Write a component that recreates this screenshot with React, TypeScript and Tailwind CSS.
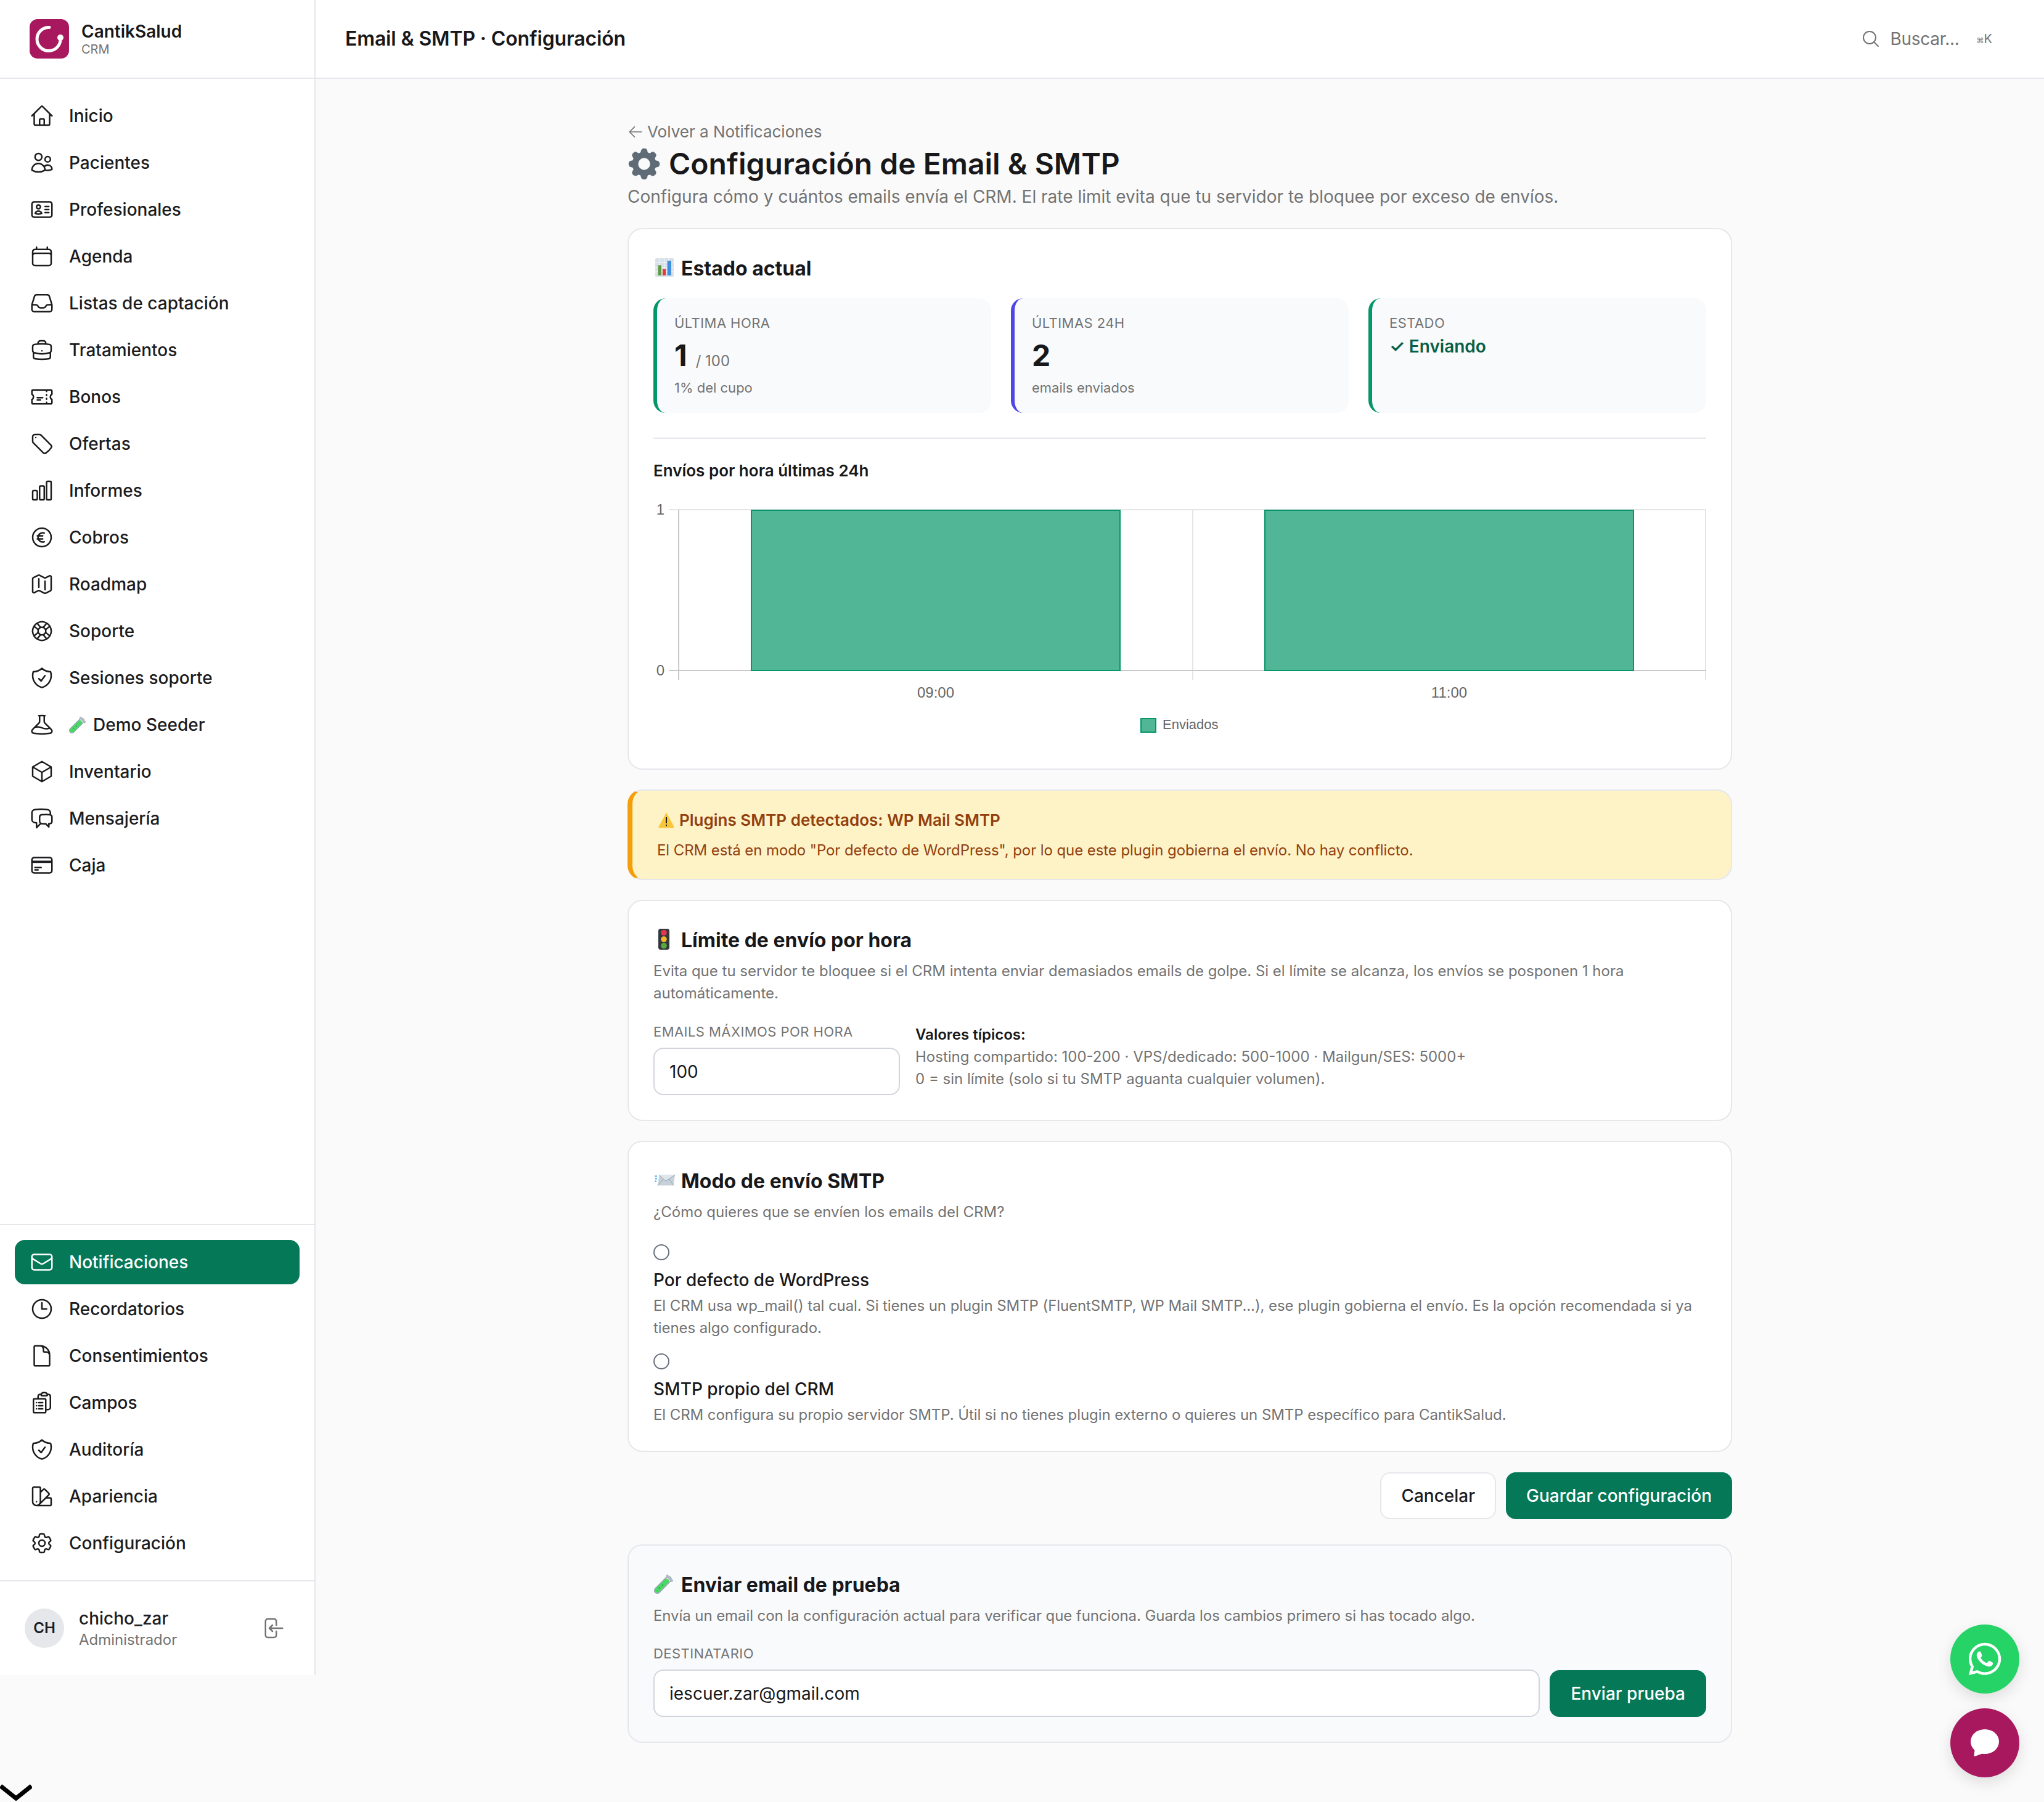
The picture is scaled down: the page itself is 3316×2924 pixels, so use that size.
import type { ComponentType, ReactNode } from "react";
import { FaWhatsapp } from "react-icons/fa";
import {
  HiCog8Tooth,
  HiOutlineArrowLeft,
  HiOutlineArrowLeftOnRectangle,
  HiOutlineBeaker,
  HiOutlineBriefcase,
  HiOutlineCalendar,
  HiOutlineChartBar,
  HiOutlineChatBubbleLeftRight,
  HiOutlineClipboardDocumentList,
  HiOutlineClock,
  HiOutlineCog6Tooth,
  HiOutlineCreditCard,
  HiOutlineCube,
  HiOutlineCurrencyEuro,
  HiOutlineDocument,
  HiOutlineEnvelope,
  HiOutlineHome,
  HiOutlineIdentification,
  HiOutlineInbox,
  HiOutlineLifebuoy,
  HiOutlineMagnifyingGlass,
  HiOutlineMap,
  HiOutlineShieldCheck,
  HiOutlineSwatch,
  HiOutlineTag,
  HiOutlineTicket,
  HiOutlineUsers
} from "react-icons/hi2";

type NavItem = {
  label: string;
  icon: ComponentType<{ className?: string }>;
  active?: boolean;
  tube?: boolean;
};

const mainNav: NavItem[] = [
  { label: "Inicio", icon: HiOutlineHome },
  { label: "Pacientes", icon: HiOutlineUsers },
  { label: "Profesionales", icon: HiOutlineIdentification },
  { label: "Agenda", icon: HiOutlineCalendar },
  { label: "Listas de captación", icon: HiOutlineInbox },
  { label: "Tratamientos", icon: HiOutlineBriefcase },
  { label: "Bonos", icon: HiOutlineTicket },
  { label: "Ofertas", icon: HiOutlineTag },
  { label: "Informes", icon: HiOutlineChartBar },
  { label: "Cobros", icon: HiOutlineCurrencyEuro },
  { label: "Roadmap", icon: HiOutlineMap },
  { label: "Soporte", icon: HiOutlineLifebuoy },
  { label: "Sesiones soporte", icon: HiOutlineShieldCheck },
  { label: "Demo Seeder", icon: HiOutlineBeaker, tube: true },
  { label: "Inventario", icon: HiOutlineCube },
  { label: "Mensajería", icon: HiOutlineChatBubbleLeftRight },
  { label: "Caja", icon: HiOutlineCreditCard }
];

const bottomNav: NavItem[] = [
  { label: "Notificaciones", icon: HiOutlineEnvelope, active: true },
  { label: "Recordatorios", icon: HiOutlineClock },
  { label: "Consentimientos", icon: HiOutlineDocument },
  { label: "Campos", icon: HiOutlineClipboardDocumentList },
  { label: "Auditoría", icon: HiOutlineShieldCheck },
  { label: "Apariencia", icon: HiOutlineSwatch },
  { label: "Configuración", icon: HiOutlineCog6Tooth }
];

// emoji drawings, the picture uses a colour emoji set that is not installed here
function TubeEmoji({ className }: { className?: string }) {
  return (
    <svg viewBox="1 1 30 30" className={className} fill="none" strokeLinecap="round">
      <path d="M6 26L23 9" stroke="#8f9ea9" strokeWidth="10" />
      <path d="M6 26L23 9" stroke="#dfe6eb" strokeWidth="7" />
      <path d="M6 26L20 12" stroke="#46d862" strokeWidth="7" />
      <circle cx="9" cy="22" r="1" fill="#2a9c44" />
      <circle cx="14" cy="18" r="1" fill="#2a9c44" />
      <path d="M21 4L28 11" stroke="#aebbc5" strokeWidth="4" />
    </svg>
  );
}

function ChartEmoji() {
  return (
    <svg viewBox="0 0 29 29" className="h-[30px] w-[30px]">
      <rect width="29" height="29" rx="1.5" fill="#d8e1e9" />
      <path d="M0 7H29M0 14H29M0 21H29M7 0V29M14 0V29M21 0V29" stroke="#f3f6f8" strokeWidth="1" />
      <rect x="4.5" y="11" width="5" height="16" fill="#5a9a3a" />
      <rect x="11.5" y="17" width="5" height="10" fill="#e5393f" />
      <rect x="19" y="4" width="6" height="23" fill="#3f8fe0" />
    </svg>
  );
}

function TrafficEmoji() {
  return (
    <svg viewBox="0 0 17 32" className="h-[34px] w-[18px]">
      <rect width="17" height="32" rx="3.5" fill="#33383d" />
      <circle cx="8.5" cy="6" r="4.5" fill="#e5364f" />
      <circle cx="8.5" cy="16" r="4.5" fill="#f5b72c" />
      <circle cx="8.5" cy="26" r="4.5" fill="#58a93e" />
    </svg>
  );
}

function EnvelopeEmoji() {
  return (
    <svg viewBox="0 0 33 19" className="h-[20px] w-[33px]" fill="none">
      <path d="M7.5 1H33L30.5 18H5Z" fill="#c6d1da" />
      <path d="M7.5 1L18 11L33 1" fill="#dfe6eb" stroke="#93a2ad" strokeWidth="1" />
      <path d="M5 18L14 8M30.5 18L23 7" stroke="#93a2ad" strokeWidth="1" />
      <path d="M0 3H4M1 7H4M0 11H3" stroke="#45a9f2" strokeWidth="2" />
    </svg>
  );
}

function WarningEmoji() {
  return (
    <svg viewBox="0 0 26 26" className="h-[26px] w-[26px]">
      <path d="M13 1.5L25 23.5Q25.5 25 24 25H2Q.5 25 1 23.5Z" fill="#f8c637" stroke="#f8c637" strokeLinejoin="round" />
      <rect x="12" y="8" width="2" height="10" fill="#1c1c1c" />
      <rect x="12" y="20" width="2" height="2.5" fill="#1c1c1c" />
    </svg>
  );
}

function NavLink({ item }: { item: NavItem }) {
  const Icon = item.icon;
  return (
    <div
      className={
        item.active
          ? "flex h-[72px] items-center gap-6 rounded-2xl bg-[#047857] px-6 text-[28px] font-medium text-white"
          : "flex h-[72px] items-center gap-6 rounded-2xl px-6 text-[28px] font-medium text-[#1c1c1e]"
      }
    >
      <Icon className="h-10 w-10 shrink-0" />
      {item.tube ? <TubeEmoji className="-mr-[13px] h-7 w-7 shrink-0" /> : null}
      <span>{item.label}</span>
    </div>
  );
}

function Sidebar() {
  return (
    <aside className="flex h-[2718px] w-[512px] shrink-0 flex-col border-r-2 border-[#e5e7eb] bg-white">
      <div className="flex h-[128px] shrink-0 items-center gap-5 border-b-2 border-[#e5e7eb] px-12">
        <svg viewBox="0 0 64 64" className="h-16 w-16 shrink-0">
          <rect width="64" height="64" rx="13" fill="#a8185f" />
          <path d="M32 13.5A19 19 0 1 0 50 31" fill="none" stroke="#fff" strokeWidth="5" strokeLinecap="round" />
          <circle cx="50" cy="30" r="5" fill="#fff" />
        </svg>
        <div className="flex flex-col">
          <span className="text-[28px] leading-[34px] font-semibold text-[#18181b]">CantikSalud</span>
          <span className="text-[20px] leading-[24px] text-[#737373]">CRM</span>
        </div>
      </div>
      <nav className="flex flex-1 flex-col gap-1 p-6">
        {mainNav.map((item) => (
          <NavLink key={item.label} item={item} />
        ))}
      </nav>
      <nav className="flex flex-col gap-1 border-t-2 border-[#e5e7eb] p-6">
        {bottomNav.map((item) => (
          <NavLink key={item.label} item={item} />
        ))}
      </nav>
      <div className="flex h-[154px] shrink-0 items-center gap-6 border-t-2 border-[#e5e7eb] pr-[48px] pl-10">
        <div className="flex h-16 w-16 shrink-0 items-center justify-center rounded-full bg-[#e5e7eb] text-[24px] font-semibold text-[#1c1c1e]">
          CH
        </div>
        <div className="flex min-w-0 flex-1 flex-col">
          <span className="text-[28px] leading-[36px] font-medium text-[#1c1c1e]">chicho_zar</span>
          <span className="text-[24px] leading-[33px] text-[#737373]">Administrador</span>
        </div>
        <HiOutlineArrowLeftOnRectangle className="h-10 w-10 shrink-0 text-[#737373]" />
      </div>
    </aside>
  );
}

function TopBar() {
  return (
    <header className="flex h-[128px] shrink-0 items-center justify-between border-b-2 border-[#e5e7eb] bg-white pr-[84px] pl-12">
      <h1 className="text-[32px] font-semibold tracking-[-0.15px] text-[#18181b]">Email &amp; SMTP · Configuración</h1>
      <div className="flex items-center text-[#737373]">
        <HiOutlineMagnifyingGlass className="h-8 w-8" />
        <span className="ml-4 text-[28px] tracking-[-0.3px]">Buscar...</span>
        <span className="ml-7 flex items-baseline text-[20px]">
          <span className="text-[12px]">⌘</span>K
        </span>
      </div>
    </header>
  );
}

function Card({ children, tinted }: { children: ReactNode; tinted?: boolean }) {
  return (
    <section
      className={
        tinted
          ? "rounded-3xl border-2 border-[#e5e7eb] bg-[#f9fafb] p-10"
          : "rounded-3xl border-2 border-[#e5e7eb] bg-white p-10"
      }
    >
      {children}
    </section>
  );
}

function CardTitle({ emoji, children }: { emoji: ReactNode; children: ReactNode }) {
  return (
    <h2 className="flex items-center text-[32px] leading-[48px] font-[650] text-[#18181b]">
      <span className="flex h-[48px] w-[45px] shrink-0 items-center pb-[5px]">{emoji}</span>
      {children}
    </h2>
  );
}

function Hint({ children, className }: { children: ReactNode; className?: string }) {
  return <p className={`text-[24px] leading-[36px] text-[#737373] ${className ?? ""}`}>{children}</p>;
}

function FieldLabel({ children }: { children: ReactNode }) {
  return <div className="text-[22px] leading-[33px] tracking-[0.44px] text-[#737373] uppercase">{children}</div>;
}

function StatCard({ label, border, children }: { label: string; border: string; children: ReactNode }) {
  return (
    <div className={`rounded-[20px] border-l-[6px] bg-[#f9fafb] px-7 py-6 ${border}`}>
      <FieldLabel>{label}</FieldLabel>
      {children}
    </div>
  );
}

function StatValue({ value, suffix }: { value: string; suffix?: string }) {
  return (
    <div className="flex h-[72px] items-baseline leading-[72px]">
      <span className="text-[48px] font-bold text-[#18181b]">{value}</span>
      {suffix ? <span className="ml-[14px] text-[24px] text-[#737373]">{suffix}</span> : null}
    </div>
  );
}

function SendsChart() {
  return (
    <svg
      viewBox="0 0 1708 400"
      className="mt-6 block h-[400px] w-[1708px] font-['Liberation_Sans',Arial,sans-serif] text-[24px]"
    >
      <g fill="none" strokeWidth="2">
        <path d="M875 20V296M1707 20V296M25 20H1708" stroke="#e5e5e5" />
        <path d="M41 20V296M25 281H1708" stroke="#c9c9c9" />
      </g>
      <rect x="159" y="21" width="598" height="260" fill="#50b696" stroke="#059669" strokeWidth="2" />
      <rect x="992" y="21" width="598" height="260" fill="#50b696" stroke="#059669" strokeWidth="2" />
      <g fill="#666666">
        <text x="18" y="22" textAnchor="end" dominantBaseline="middle">1</text>
        <text x="18" y="283" textAnchor="end" dominantBaseline="middle">0</text>
        <text x="458" y="319" textAnchor="middle" dominantBaseline="middle">09:00</text>
        <text x="1291" y="319" textAnchor="middle" dominantBaseline="middle">11:00</text>
        <text x="826" y="370" dominantBaseline="middle" className="text-[22px]">Enviados</text>
      </g>
      <rect x="791" y="359" width="24" height="22" fill="#50b696" stroke="#059669" strokeWidth="2" />
    </svg>
  );
}

function ModeOption({ title, children, className }: { title: string; children: ReactNode; className?: string }) {
  return (
    <label className={`block ${className ?? ""}`}>
      <input
        type="radio"
        name="smtp-mode"
        className="block h-[26px] w-[26px] appearance-none rounded-full border-2 border-[#6b7280] bg-white"
      />
      <div className="mt-[11px] text-[28px] leading-[42px] font-[550] text-[#18181b]">{title}</div>
      <Hint className="mt-[3px] tracking-[-0.08px]">{children}</Hint>
    </label>
  );
}

function TextField({ value, className }: { value: string; className?: string }) {
  return (
    <input
      readOnly
      value={value}
      className={`h-[77px] rounded-2xl border-2 border-[#d1d5db] bg-white px-6 text-[28px] text-[#18181b] ${className ?? ""}`}
    />
  );
}

function Content() {
  return (
    <main className="flex-1 pt-[66px] pb-[96px]">
      <div className="mx-auto flex w-[1792px] flex-col">
        <div className="flex items-center gap-[6px] text-[26px] leading-[39px] text-[#737373]">
          <HiOutlineArrowLeft className="h-[26px] w-[26px]" />
          Volver a Notificaciones
        </div>
        <h2 className="mt-[3px] flex items-center text-[48px] leading-[60px] font-semibold text-[#18181b]">
          <HiCog8Tooth className="-my-1 mr-[9px] -ml-[4px] h-[62px] w-[62px] shrink-0 text-[#5f6c78]" />
          Configuración de Email &amp; SMTP
        </h2>
        <p className="mt-[2px] mb-[30px] text-[28px] leading-[42px] text-[#737373]">
          Configura cómo y cuántos emails envía el CRM. El rate limit evita que tu servidor te bloquee por exceso de
          envíos.
        </p>

        <Card>
          <CardTitle emoji={<span className="ml-[3px] flex"><ChartEmoji /></span>}>Estado actual</CardTitle>
          <div className="mt-6 grid grid-cols-3 gap-8">
            <StatCard label="Última hora" border="border-[#059669]">
              <StatValue value="1" suffix="/ 100" />
              <div className="text-[22px] leading-[33px] text-[#737373]">1% del cupo</div>
            </StatCard>
            <StatCard label="Últimas 24h" border="border-[#4f46e5]">
              <StatValue value="2" />
              <div className="text-[22px] leading-[33px] text-[#737373]">emails enviados</div>
            </StatCard>
            <StatCard label="Estado" border="border-[#059669]">
              <div className="text-[28px] leading-[42px] font-semibold text-[#065f46]">✓ Enviando</div>
            </StatCard>
          </div>
          <div className="mt-10 border-t-2 border-[#e5e7eb] pt-8">
            <div className="text-[26px] leading-[39px] font-semibold text-[#18181b]">Envíos por hora últimas 24h</div>
            <SendsChart />
          </div>
        </Card>

        <div className="mt-8 rounded-3xl border-2 border-l-8 border-[#e5e7eb] border-l-[#f59e0b] bg-[#fef3c7] px-10 py-7 text-[#92400e]">
          <div className="flex items-center text-[26px] leading-[39px] font-semibold">
            <span className="flex w-[36px] shrink-0 pl-[2px]">
              <WarningEmoji />
            </span>
            Plugins SMTP detectados: WP Mail SMTP
          </div>
          <div className="mt-3 text-[24px] leading-[36px] tracking-[-0.08px]">
            El CRM está en modo "Por defecto de WordPress", por lo que este plugin gobierna el envío. No hay conflicto.
          </div>
        </div>

        <div className="mt-8">
          <Card>
            <CardTitle emoji={<span className="ml-[8px] flex"><TrafficEmoji /></span>}>Límite de envío por hora</CardTitle>
            <Hint className="mt-2">
              Evita que tu servidor te bloquee si el CRM intenta enviar demasiados emails de golpe. Si el límite se
              alcanza, los envíos se posponen 1 hora automáticamente.
            </Hint>
            <div className="mt-[28px] flex items-start gap-[25px]">
              <div className="w-[400px] shrink-0">
                <FieldLabel>Emails máximos por hora</FieldLabel>
                <TextField value="100" className="mt-[9px] w-full" />
              </div>
              <div className="pt-[3px] text-[24px] leading-[36px] text-[#737373]">
                <div className="font-semibold text-[#18181b]">Valores típicos:</div>
                <div>Hosting compartido: 100-200 · VPS/dedicado: 500-1000 · Mailgun/SES: 5000+</div>
                <div>0 = sin límite (solo si tu SMTP aguanta cualquier volumen).</div>
              </div>
            </div>
          </Card>
        </div>

        <div className="mt-8">
          <Card>
            <CardTitle emoji={<span className="ml-[2px] flex"><EnvelopeEmoji /></span>}>Modo de envío SMTP</CardTitle>
            <Hint className="mt-2">¿Cómo quieres que se envíen los emails del CRM?</Hint>
            <ModeOption title="Por defecto de WordPress" className="mt-[34px]">
              El CRM usa wp_mail() tal cual. Si tienes un plugin SMTP (FluentSMTP, WP Mail SMTP...), ese plugin gobierna
              el envío. Es la opción recomendada si ya tienes algo configurado.
            </ModeOption>
            <ModeOption title="SMTP propio del CRM" className="mt-[23px]">
              El CRM configura su propio servidor SMTP. Útil si no tienes plugin externo o quieres un SMTP específico
              para CantikSalud.
            </ModeOption>
          </Card>
        </div>

        <div className="mt-[33px] flex justify-end gap-4">
          <button className="flex h-[76px] items-center rounded-2xl border-2 border-[#e5e7eb] bg-white px-[32px] text-[28px] font-medium text-[#1c1c1e]">
            Cancelar
          </button>
          <button className="flex h-[76px] items-center rounded-2xl bg-[#047857] px-[33px] text-[28px] font-medium text-white">
            Guardar configuración
          </button>
        </div>

        <div className="mt-[41px]">
          <Card tinted>
            <CardTitle emoji={<TubeEmoji className="ml-[1px] h-8 w-8" />}>Enviar email de prueba</CardTitle>
            <Hint className="mt-2 tracking-[-0.08px]">
              Envía un email con la configuración actual para verificar que funciona. Guarda los cambios primero si has
              tocado algo.
            </Hint>
            <div className="mt-[27px]">
              <FieldLabel>Destinatario</FieldLabel>
              <div className="mt-[9px] flex items-end gap-4">
                <TextField value="iescuer.zar@gmail.com" className="min-w-0 flex-1" />
                <button className="flex h-[76px] items-center rounded-2xl bg-[#047857] px-[34px] text-[28px] font-medium text-white">
                  Enviar prueba
                </button>
              </div>
            </div>
          </Card>
        </div>
      </div>
    </main>
  );
}

function FloatingButtons() {
  return (
    <div className="fixed right-10 bottom-10 flex flex-col gap-6">
      <div className="flex h-28 w-28 items-center justify-center rounded-full bg-[#25d366] text-white shadow-[0_8px_24px_rgba(0,0,0,0.12)]">
        <FaWhatsapp className="h-[60px] w-[60px]" />
      </div>
      <div className="flex h-28 w-28 items-center justify-center rounded-full bg-[#a8185f] shadow-[0_8px_24px_rgba(0,0,0,0.12)]">
        <svg viewBox="0 0 46 44" className="h-[44px] w-[46px]" fill="#fff">
          <ellipse cx="23" cy="20" rx="23" ry="20" />
          <path d="M7 30L5.5 42C5.3 43.6 6.5 44 8 43.6L20 39Z" />
        </svg>
      </div>
    </div>
  );
}

export default function App() {
  return (
    <div className="relative flex min-h-screen items-start overflow-hidden bg-[#fafafa] font-['Inter',sans-serif]">
      <Sidebar />
      <div className="flex min-w-0 flex-1 flex-col">
        <TopBar />
        <Content />
      </div>
      <FloatingButtons />
      <svg viewBox="0 0 52 28" className="fixed bottom-[2px] left-0 h-7 w-[52px]" fill="none">
        <path d="M1 4L26 24L51 4" stroke="#000" strokeWidth="7" />
      </svg>
    </div>
  );
}
